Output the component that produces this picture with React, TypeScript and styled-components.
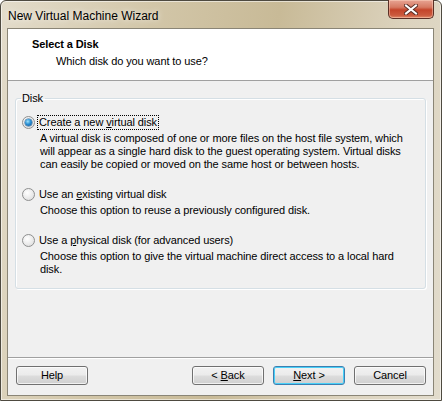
import React from "react";
import styled, { createGlobalStyle } from "styled-components";

const GlobalStyle = createGlobalStyle`
  html, body {
    margin: 0;
    padding: 0;
    background: #ffffff;
  }
  body {
    font-family: "Liberation Sans", Arial, sans-serif;
    font-size: 11px;
    color: #000;
  }
`;

const options = [
  {
    id: "new",
    label: ["Create a new ", "v", "irtual disk"],
    lines: [
      "A virtual disk is composed of one or more files on the host file system, which",
      "will appear as a single hard disk to the guest operating system. Virtual disks",
      "can easily be copied or moved on the same host or between hosts.",
    ],
    checked: true,
  },
  {
    id: "existing",
    label: ["Use an ", "e", "xisting virtual disk"],
    lines: ["Choose this option to reuse a previously configured disk."],
    checked: false,
  },
  {
    id: "physical",
    label: ["Use a ", "p", "hysical disk (for advanced users)"],
    lines: [
      "Choose this option to give the virtual machine direct access to a local hard",
      "disk.",
    ],
    checked: false,
  },
];

export default function App() {
  return (
    <>
      <GlobalStyle />
      <Window>
        <TitleBar>
          <Title>New Virtual Machine Wizard</Title>
          <CloseButton>
            <svg width="14" height="11" viewBox="0 0 14 11">
              <path
                d="M2 1.5 L12 9.5 M12 1.5 L2 9.5"
                stroke="#5a2e26"
                strokeWidth="4"
                strokeLinecap="square"
              />
              <path
                d="M2 1.5 L12 9.5 M12 1.5 L2 9.5"
                stroke="#ffffff"
                strokeWidth="2"
                strokeLinecap="square"
              />
            </svg>
          </CloseButton>
        </TitleBar>
        <Client>
          <Header>
            <HeaderTitle>Select a Disk</HeaderTitle>
            <HeaderSub>Which disk do you want to use?</HeaderSub>
          </Header>
          <Body>
            <GroupBox>
              <Legend>Disk</Legend>
              {options.map((o) => (
                <Option key={o.id} $first={o.checked}>
                  <RadioRow>
                    <Radio $checked={o.checked} />
                    <RadioLabel $focused={o.checked}>
                      {o.label[0]}
                      <u>{o.label[1]}</u>
                      {o.label[2]}
                    </RadioLabel>
                  </RadioRow>
                  <Description>
                    {o.lines.map((l) => (
                      <div key={l}>{l}</div>
                    ))}
                  </Description>
                </Option>
              ))}
            </GroupBox>
            <Spacer />
          </Body>
          <Footer>
            <Button>Help</Button>
            <ButtonGroup>
              <Button>
                {"< "}
                <u>B</u>ack
              </Button>
              <Button $default>
                <u>N</u>ext{" >"}
              </Button>
              <Button>Cancel</Button>
            </ButtonGroup>
          </Footer>
        </Client>
      </Window>
    </>
  );
}

const Window = styled.div`
  width: 442px;
  height: 401px;
  box-sizing: border-box;
  display: flex;
  flex-direction: column;
  border: 1px solid #4e4a40;
  border-radius: 6px 6px 0 0;
  background: linear-gradient(
    100deg,
    #e3dccb 0%,
    #d2c6a8 30%,
    #c8ba97 55%,
    #dcd3be 80%,
    #e2dccd 100%
  );
  box-shadow: inset 0 0 0 1px rgba(255, 255, 255, 0.55);
`;

const TitleBar = styled.div`
  height: 27px;
  display: flex;
  justify-content: space-between;
  align-items: flex-start;
  padding-left: 7px;
  padding-right: 6px;
`;

const Title = styled.div`
  font-size: 12px;
  line-height: 12px;
  margin-top: 9px;
  color: #000;
  text-shadow: 0 0 6px rgba(255, 255, 255, 0.9);
`;

const CloseButton = styled.div`
  width: 46px;
  height: 19px;
  margin-top: -1px;
  margin-right: 1px;
  box-sizing: border-box;
  display: flex;
  align-items: center;
  justify-content: center;
  border: 1px solid #5a2f25;
  border-top: none;
  border-radius: 0 0 5px 5px;
  background: linear-gradient(
    180deg,
    #e8a493 0%,
    #d67a63 40%,
    #c4442a 55%,
    #cb5a3e 85%,
    #e08a6a 100%
  );
  box-shadow: inset 0 0 0 1px rgba(255, 220, 200, 0.45);
`;

const Client = styled.div`
  flex: 1;
  margin: 0 7px 4px 6px;
  display: flex;
  flex-direction: column;
  background: #f0f0f0;
  border: 1px solid #8a8576;
  letter-spacing: -0.1px;
`;

const Header = styled.div`
  height: 52px;
  box-sizing: border-box;
  background: #ffffff;
  border-bottom: 1px solid #a0a0a0;
  padding: 9px 0 0 24px;
`;

const HeaderTitle = styled.div`
  font-weight: bold;
  line-height: 13px;
`;

const HeaderSub = styled.div`
  line-height: 13px;
  margin-top: 4px;
  padding-left: 24px;
`;

const Body = styled.div`
  flex: 1;
  display: flex;
  flex-direction: column;
  padding: 0 7px;
`;

const GroupBox = styled.fieldset`
  margin: 11px 0 0 0;
  padding: 3px 6px 12px 6px;
  border: 1px solid #d5dfe5;
  border-radius: 3px;
  box-shadow: inset 1px 1px 0 #ffffff, 1px 1px 0 #ffffff;
  min-width: 0;
`;

const Legend = styled.legend`
  padding: 0 2px 0 1px;
  margin-left: -1px;
  line-height: 13px;
`;

const Option = styled.div<{ $first?: boolean }>`
  margin-top: ${(p) => (p.$first ? "7px" : "16px")};
`;

const RadioRow = styled.div`
  display: flex;
  align-items: center;
  height: 15px;
`;

const Radio = styled.span<{ $checked?: boolean }>`
  position: relative;
  width: 13px;
  height: 13px;
  box-sizing: border-box;
  border-radius: 50%;
  border: 1px solid #8e8f8f;
  background: radial-gradient(circle at 40% 35%, #ffffff 0%, #f0f0f0 40%, #d8d8d8 100%);
  margin-right: 3px;
  &::after {
    content: "";
    display: ${(p) => (p.$checked ? "block" : "none")};
    position: absolute;
    left: 2px;
    top: 2px;
    width: 7px;
    height: 7px;
    border-radius: 50%;
    background: radial-gradient(circle at 40% 35%, #9fe3fb 0%, #2a8fd3 45%, #0e4f92 100%);
    box-shadow: 0 0 0 0.5px #2d5f8b;
  }
`;

const RadioLabel = styled.span<{ $focused?: boolean }>`
  line-height: 13px;
  padding: 0 1px;
  outline: ${(p) => (p.$focused ? "1px dotted #000" : "none")};
  outline-offset: 0;
`;

const Description = styled.div`
  padding-left: 18px;
  margin-top: 2px;
  line-height: 13px;
`;

const Spacer = styled.div`
  flex: 1;
`;

const Footer = styled.div`
  height: 38px;
  box-sizing: border-box;
  border-top: 1px solid #a0a0a0;
  box-shadow: inset 0 1px 0 #ffffff;
  display: flex;
  justify-content: space-between;
  align-items: flex-start;
  padding: 8px 7px 0 8px;
`;

const ButtonGroup = styled.div`
  display: flex;
  gap: 9px;
`;

const Button = styled.div<{ $default?: boolean }>`
  width: 72px;
  height: 19px;
  box-sizing: border-box;
  display: flex;
  align-items: center;
  justify-content: center;
  white-space: pre;
  border: 1px solid ${(p) => (p.$default ? "#3c7fb1" : "#707070")};
  border-radius: 3px;
  background: linear-gradient(180deg, #f2f2f2 0%, #ebebeb 48%, #dddddd 52%, #cfcfcf 100%);
  box-shadow: inset 0 0 0 1px ${(p) => (p.$default ? "#48d0f8" : "rgba(255,255,255,0.7)")};
  line-height: 13px;
`;
